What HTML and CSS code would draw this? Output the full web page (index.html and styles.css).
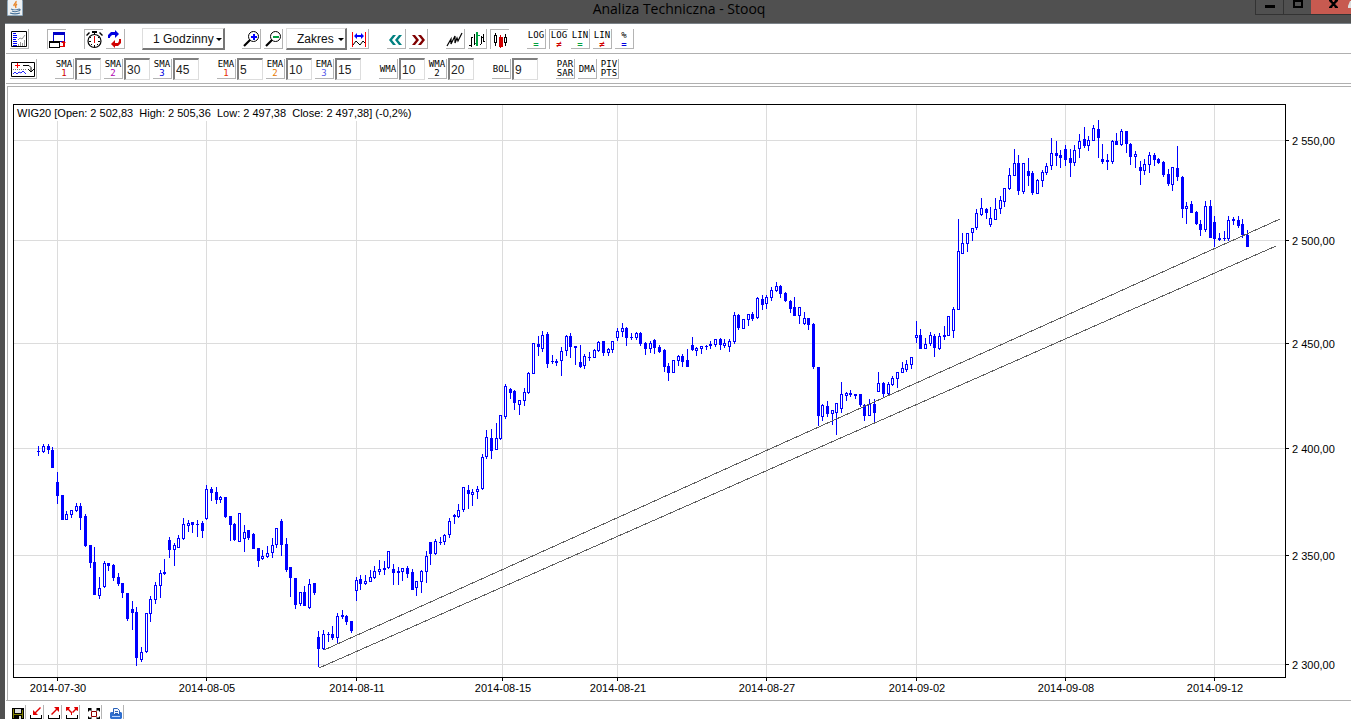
FILE: index.html
```html
<!DOCTYPE html>
<html lang="pl">

<head>
    <meta charset="UTF-8">
    <meta name="viewport" content="width=device-width, initial-scale=1.0">
    <title>Analiza Techniczna - Stooq</title>
    <link rel="stylesheet" href="styles.css">
</head>

<body>
    <header class="titlebar">
        <svg class="java" width="16" height="16" viewBox="0 0 16 16" aria-hidden="true">
            <rect width="16" height="16" rx="1" fill="#8fa9bd" />
            <rect x="1" y="0" width="14" height="15" fill="#eef1f3" />
            <path d="M9 1c1 2-3 3-2 5M10 4c-2 1-2 2-1 4" fill="none" stroke="#e8862a" stroke-width="1.4" />
            <path d="M4 9c2 1 6 1 8 0M5 11c2 1 4 1 6 0M12 9c2 0 1 2-1 2M3 13c3 1 7 1 10 0" fill="none" stroke="#47729a" stroke-width="1.2" />
        </svg>
        <h1>Analiza Techniczna - Stooq</h1>
        <div class="window-buttons">
            <button type="button" aria-label="Minimalizuj">
                <svg width="10" height="14" viewBox="0 0 10 14"><rect y="5" width="10" height="3" /></svg>
            </button>
            <button type="button" aria-label="Maksymalizuj">
                <svg width="10" height="14" viewBox="0 0 10 14"><path d="M0 0h10v8H0zM2 2v4h6V2z" fill-rule="evenodd" /></svg>
            </button>
            <button type="button" class="close" aria-label="Zamknij">
                <svg width="40" height="14" viewBox="0 0 40 14">
                    <path d="M18 0h3l1 2h1l1-2h3v1l-3 3 3 3v1h-3l-1-2h-1l-1 2h-3V7l3-3-3-3z" />
                    <path d="M40 1v7h-3V6l2-5z" fill="#ddd" />
                </svg>
            </button>
        </div>
    </header>

    <nav class="toolbar" aria-label="Wykres">
        <div class="group">
            <button type="button" aria-label="Lista">
                <svg viewBox="0 0 18 19">
                    <path d="M1.5 2.5h15v15h-15z" fill="none" stroke="#000" />
                    <path d="M3 4h3v1H3zM3 6h4v1H3zM3 8h4v1H3zM3 10h3v1H3zM3 12h4v1H3zM3 14h4v1H3zM3 16h4v1H3z" fill="#00f" />
                    <path d="M8 11l2-2 2 1 3-4M8.5 15v2M10.5 13v4M12.5 14v3M14.5 11v6" fill="none" stroke="#999" />
                </svg>
            </button>
        </div>
        <div class="group">
            <button type="button" class="pushed" aria-label="Okno">
                <svg viewBox="0 0 18 19">
                    <path d="M5 2h12v10H5zM6 5v6h10V5z" fill="#0000c8" fill-rule="evenodd" />
                    <path d="M1 11h11v7H1zM2 13v4h9v-4z" fill-rule="evenodd" />
                    <path d="M2 13h9v4H2z" fill="#fff" />
                    <path d="M12 16h3v-3h-2l2-2h1l2 2h-1v4h-5z" fill="#e00000" />
                </svg>
            </button>
        </div>
        <div class="group">
            <button type="button" class="pushed" aria-label="Czas rzeczywisty">
                <svg viewBox="0 0 18 19">
                    <circle cx="9.5" cy="11" r="6.5" fill="none" stroke="#000" stroke-width="1.2" />
                    <path d="M7 1h5v2H7zM9 3h1v2H9zM1 5l3-3 1 1-3 3zM14 3l1-1 3 3-1 1zM4 11h2v1H4zM13 11h2v1h-2zM9 15h1v2H9zM5 7h1v1H5zM13 7h1v1h-1zM6 14h1v1H6zM12 14h1v1h-1z" />
                    <path d="M9 6h1v7H9z" fill="#e00000" />
                </svg>
            </button>
            <button type="button" aria-label="Odśwież">
                <svg viewBox="0 0 18 19">
                    <path d="M2 9V6l3-3h4V1l4 4-4 4V6H6L4 8v1z" fill="#0000e0" />
                    <path d="M15 10v4l-3 3H9v2l-4-4 4-4v3h3l1-2v-2z" fill="#d00000" />
                </svg>
            </button>
        </div>
        <span class="drop drop-period">
            <select aria-label="Interwał"><option>1 Godzinny</option></select>
        </span>
        <div class="group">
            <button type="button" aria-label="Powiększ">
                <svg viewBox="0 0 18 19">
                    <circle cx="11.5" cy="7.5" r="5" fill="none" stroke="#000" />
                    <path d="M8 11l-6 6" stroke="#000" stroke-width="2.2" />
                    <path d="M11 5h2v2h2v2h-2v2h-2V9H9V7h2z" fill="#00f" />
                </svg>
            </button>
            <button type="button" aria-label="Pomniejsz">
                <svg viewBox="0 0 18 19">
                    <circle cx="11.5" cy="7.5" r="5" fill="none" stroke="#000" />
                    <path d="M8 11l-6 6" stroke="#000" stroke-width="2.2" />
                    <path d="M9 7h6v2H9z" fill="#00a040" />
                </svg>
            </button>
            <span class="drop drop-range">
                <select aria-label="Zakres"><option>Zakres</option></select>
            </span>
            <button type="button" aria-label="Dopasuj zakres">
                <svg viewBox="0 0 18 19">
                    <path d="M2 3h1v15H2zM15 3h1v15h-1z" fill="#f00" />
                    <path d="M4 7l3-3v2h4V4l3 3-3 3V8H7v2z" fill="#00f" />
                    <path d="M3 16l3-4 4 4 3-4 2 2" fill="none" stroke="#000" />
                </svg>
            </button>
        </div>
        <div class="group">
            <button type="button" aria-label="Wstecz">
                <svg viewBox="0 0 18 19"><path d="M6 6h3l-4 5 4 5H6l-4-5zM12 6h3l-4 5 4 5h-3l-4-5z" fill="#008080" /></svg>
            </button>
            <button type="button" aria-label="Dalej">
                <svg viewBox="0 0 18 19"><path d="M3 6h3l4 5-4 5H3l4-5zM9 6h3l4 5-4 5H9l4-5z" fill="#800000" /></svg>
            </button>
        </div>
        <div class="group">
            <button type="button" aria-label="Liniowy">
                <svg viewBox="0 0 18 19"><path d="M1 17l4-7v5l4-8v7l2-5 1 3 4-8" fill="none" stroke="#000" stroke-width="1.2" /></svg>
            </button>
            <button type="button" aria-label="Słupkowy">
                <svg viewBox="0 0 18 19">
                    <path d="M1 16h2V8h2v1H4v9H3v-1H1zM6 5h1v11H6zM12 15h1V7h1v8h-1v1h-1zM14 8h1V5h1v7h1v1h-2V9h-1z" />
                    <path d="M8 3h2v14H8zM7 14h1v1H7zM10 6h2v1h-2z" fill="#00a040" />
                </svg>
            </button>
            <button type="button" class="pushed" aria-label="Świecowy">
                <svg viewBox="0 0 18 19">
                    <path d="M4 3h1v2h1v8H5v3H4v-3H3V5h1zM4 6v6h1V6zM14 4h1v3h1v6h-1v3h-1v-3h-1V7h1zM14 8v4h1V8z" fill-rule="evenodd" />
                    <path d="M9 5h1v2h2v10h-2v1H9v-1H8V7h1z" fill="#d00000" />
                </svg>
            </button>
        </div>
        <div class="group scale">
            <button type="button"><span>LOG</span><span class="sign green">=</span></button>
            <button type="button" class="pushed"><span>LOG</span><span class="sign red">≠</span></button>
            <button type="button"><span>LIN</span><span class="sign green">=</span></button>
            <button type="button"><span>LIN</span><span class="sign red">≠</span></button>
            <button type="button"><span>%</span><span class="sign blue">=</span></button>
        </div>
    </nav>

    <nav class="toolbar" aria-label="Wskaźniki">
        <button type="button" class="wide" aria-label="Dodaj wskaźnik">
            <svg viewBox="0 0 26 19">
                <path d="M1.5 3.5h23v14h-23z" fill="none" stroke="#000" />
                <path d="M7 4h1v2h2v1H8v2H7V7H5V6h2z" fill="#f00" />
                <path d="M3 10h1v1H3zM5 10h1v1H5zM7 10h1v1H7zM9 10h1v1H9zM11 10h1v1h-1zM13 10h1v1h-1zM15 10h1v1h-1z" fill="#777" />
                <path d="M3 15l2-2 2 2 2-2 2 1 2-2 3 3" fill="none" stroke="#22f" />
                <path d="M13 6.5h6l2 2V13M18 10l3 3 3-3" fill="none" stroke="#000" />
            </svg>
        </button>
        <div class="group">
            <div class="pair"><button type="button" id="sma1"><span>SMA</span><span class="red">1</span></button><input type="text" value="15" aria-labelledby="sma1"></div>
            <div class="pair"><button type="button" id="sma2"><span>SMA</span><span class="purple">2</span></button><input type="text" value="30" aria-labelledby="sma2"></div>
            <div class="pair"><button type="button" id="sma3"><span>SMA</span><span class="blue">3</span></button><input type="text" value="45" aria-labelledby="sma3"></div>
        </div>
        <div class="group">
            <div class="pair"><button type="button" id="ema1"><span>EMA</span><span class="vermilion">1</span></button><input type="text" value="5" aria-labelledby="ema1"></div>
            <div class="pair"><button type="button" id="ema2"><span>EMA</span><span class="orange">2</span></button><input type="text" value="10" aria-labelledby="ema2"></div>
            <div class="pair"><button type="button" id="ema3"><span>EMA</span><span class="violet">3</span></button><input type="text" value="15" aria-labelledby="ema3"></div>
        </div>
        <div class="group">
            <div class="pair"><button type="button" id="wma1" class="single"><span>WMA</span></button><input type="text" value="10" aria-labelledby="wma1"></div>
            <div class="pair"><button type="button" id="wma2"><span>WMA</span><span>2</span></button><input type="text" value="20" aria-labelledby="wma2"></div>
        </div>
        <div class="group">
            <div class="pair"><button type="button" id="bol" class="single"><span>BOL</span></button><input type="text" value="9" aria-labelledby="bol"></div>
        </div>
        <div class="group">
            <button type="button"><span>PAR</span><span>SAR</span></button>
            <button type="button" class="single"><span>DMA</span></button>
            <button type="button"><span>PIV</span><span>PTS</span></button>
        </div>
    </nav>

    <main class="chart-panel">
        <svg id="chart" class="chart" viewBox="8 87 1343 613" role="img" aria-label="WIG20"></svg>
    </main>

    <footer class="bottombar">
        <div class="group">
            <button type="button" aria-label="Zapisz">
                <svg viewBox="0 0 13 14">
                    <path d="M0 2h12v12H1l-1-1z" />
                    <path d="M1 3h1v9H1zM10 4h1v8h-1zM2 8h8v1H2z" fill="#808000" />
                    <path d="M3 3h6v4H3zM7 10h2v3H7z" fill="#ddd" />
                </svg>
            </button>
            <button type="button" aria-label="Wczytaj">
                <svg viewBox="0 0 13 14">
                    <path d="M0 9h1v3h10V9h1v5H0z" />
                    <path d="M10 1l1 1-5 5 2 2H3V4l2 2z" fill="#e00000" />
                </svg>
            </button>
            <button type="button" aria-label="Eksportuj">
                <svg viewBox="0 0 13 14">
                    <path d="M0 9h1v3h10V9h1v5H0z" />
                    <path d="M4 9L3 8l5-5-2-2h5v5L9 4z" fill="#e00000" />
                </svg>
            </button>
            <button type="button" aria-label="Eksportuj wszystko">
                <svg viewBox="0 0 13 14">
                    <path d="M0 9h1v3h10V9h1v5H0z" />
                    <path d="M0 1h4L3 3l3 3v3H5V7L2 4 0 5zM12 1H8l1 2-3 3 1 1 3-3 2 1z" fill="#e00000" />
                </svg>
            </button>
        </div>
        <button type="button" aria-label="Pełny ekran">
            <svg viewBox="0 0 13 14">
                <path d="M0 2h4L3 3l1 1-1 1-1-1-2 2zM12 2H8l1 1-1 1 1 1 1-1 2 2zM0 14h4l-1-1 1-1-1-1-1 1-2-2zM12 14H8l1-1-1-1 1-1 1 1 2-2z" />
                <path d="M3.5 5.5h5v5h-5z" fill="none" stroke="#900000" />
            </svg>
        </button>
        <button type="button" aria-label="Drukuj">
            <svg viewBox="0 0 13 14">
                <path d="M1 6h10l1 1v5l-1 1H1l-1-1V7z" fill="#2f6fd0" />
                <path d="M3.5 2.5h4l2 2v4h-6z" fill="#eef4ff" stroke="#2860b8" />
                <path d="M5 5.5h3M5 7.5h3" stroke="#2860b8" />
                <path d="M2 10h8v1H2z" fill="#b8d4ff" />
            </svg>
        </button>
    </footer>
    <script src="chart.js"></script>
</body>

</html>
```

FILE: styles.css
```css
body {
    margin: 0;
    min-height: 100vh;
    box-sizing: border-box;
    border-left: 5px solid #505050;
    background-color: #fff;
    font-family: "Liberation Sans", Arial, sans-serif;
    font-size: 12px;
    color: #000;
    overflow: hidden;
}

button {
    box-sizing: border-box;
    margin: 0;
    padding: 0;
    background: none;
    border: 0;
    color: inherit;
}

/* Title bar */
.titlebar {
    display: grid;
    grid-template-columns: 1fr auto 1fr;
    align-items: start;
    height: 23px;
    padding-left: 2px;
    background-color: #505050;
    border-bottom: 1px solid #7b8288;
}

.titlebar h1 {
    margin: 0;
    font-family: "Open Sans", "Noto Sans", sans-serif;
    font-size: 14px;
    font-weight: normal;
    line-height: 18px;
}

.window-buttons {
    display: flex;
    justify-self: end;
}

.window-buttons button {
    display: flex;
    justify-content: center;
    width: 28px;
    height: 15px;
    border: 1px solid #333;
    border-top: 0;
    border-right: 0;
}

.window-buttons .close {
    width: 40px;
    background-color: #c75a50;
    border-left: 0;
}

/* Toolbars */
.toolbar {
    display: flex;
    align-items: center;
    gap: 18px;
    margin-left: 1px;
    padding: 4px 4px 3px;
    border-bottom: 1px solid #b0b0b0;
}

.group {
    display: flex;
    align-items: center;
    gap: 3px;
}

.pair {
    display: flex;
    align-items: center;
    gap: 1px;
}

.toolbar button {
    display: flex;
    flex-direction: column;
    align-items: center;
    width: 19px;
    height: 20px;
    border: 0 solid #b4b4b4;
    border-width: 0 1px 1px 0;
    font-family: "DejaVu Sans Mono", monospace;
    font-size: 9px;
    line-height: 9px;
}

.toolbar button.pushed {
    border-width: 1px 0 0 1px;
}

.toolbar button.wide {
    width: 27px;
}

.toolbar button.single {
    justify-content: center;
}

.toolbar button:has(span) {
    padding-top: 1px;
}

.toolbar .scale button {
    padding-top: 2px;
}

.toolbar .scale button.pushed {
    padding-top: 1px;
}

.scale .sign {
    font-weight: bold;
}

.toolbar svg {
    display: block;
    width: 100%;
    height: 19px;
}

.toolbar input {
    box-sizing: border-box;
    width: 26px;
    height: 22px;
    padding: 0 1px;
    border: 2px solid #808080;
    border-right: 1px solid #ddd;
    border-bottom: 1px solid #ddd;
    font: 12px "Liberation Sans", Arial, sans-serif;
    color: #222;
}

.drop {
    display: grid;
    align-items: center;
}

.drop-period {
    width: 83px;
    margin: 0 -1px;
}

.drop-range {
    width: 61px;
}

.drop select,
.drop::after {
    grid-area: 1 / 1;
}

.drop select {
    appearance: none;
    box-sizing: border-box;
    width: 100%;
    height: 22px;
    padding: 0 0 0 10px;
    background-color: #fff;
    border: 1px solid #ddd;
    border-right: 2px solid #777;
    border-bottom: 2px solid #777;
    border-radius: 0;
    font: 12px "Liberation Sans", Arial, sans-serif;
    color: #111;
}

.drop::after {
    content: "";
    justify-self: end;
    margin-right: 3px;
    border: 3px solid transparent;
    border-top-color: #000;
    border-bottom: 0;
    pointer-events: none;
}

.red {
    color: #d00000;
}

.green {
    color: #00a040;
}

.blue {
    color: #0000e0;
}

.purple {
    color: #b000b0;
}

.vermilion {
    color: #e83000;
}

.orange {
    color: #e87800;
}

.violet {
    color: #5858e8;
}

/* Chart */
.chart-panel {
    margin: 2px 0 0 2px;
    border-top: 1px solid #b0b0b0;
    border-left: 1px solid #b0b0b0;
}

.chart {
    display: block;
    width: 100%;
    height: auto;
    shape-rendering: crispEdges;
}

.chart text {
    font-size: 11px;
    white-space: pre;
}

.chart .date {
    text-anchor: middle;
}

.grid {
    fill: #dcdcdc;
}

.axis {
    fill: #000;
}

.heading-back {
    fill: #fff;
}

.trend {
    stroke: #606060;
    stroke-width: 1;
}

.candle {
    fill: #00f;
}

.candle-hollow {
    fill: #fff;
}

/* Bottom bar */
.bottombar {
    display: flex;
    gap: 8px;
    margin-left: 1px;
    padding: 4px 6px 0;
    border-top: 1px solid #b0b0b0;
}

.bottombar .group {
    gap: 4px;
}

.bottombar button {
    width: 14px;
    height: 15px;
    border-right: 1px solid #b4b4b4;
}

.bottombar svg {
    display: block;
    width: 13px;
    height: 14px;
}
```

FILE: chart.js
```js
const chart = document.getElementById("chart");

// plot frame
const LEFT = 13, TOP = 104, RIGHT = 1285, BOTTOM = 677;

const prices = [
    [140, "2 550,00"], [240, "2 500,00"], [343, "2 450,00"],
    [448, "2 400,00"], [555, "2 350,00"], [664, "2 300,00"]
];

const dates = [
    [57, "2014-07-30"], [206, "2014-08-05"], [356, "2014-08-11"],
    [502, "2014-08-15"], [617, "2014-08-21"], [766, "2014-08-27"],
    [916, "2014-09-02"], [1065, "2014-09-08"], [1214, "2014-09-12"]
];

// high, body top, body bottom, low, 1 = rising hour
const candles = [
    [446,451,452,456,0], [444,446,452,453,1], [444,446,450,454,0], [447,450,468,468,0],
    [472,482,496,504,0], [495,495,520,520,0], [511,514,520,520,1], [510,510,515,518,1],
    [503,506,511,512,1], [503,506,518,530,0], [514,516,546,547,0], [545,545,563,568,0],
    [547,562,595,595,0], [577,588,596,599,1], [561,563,587,588,1], [563,563,566,571,0],
    [564,565,578,581,0], [573,577,584,586,0], [583,583,593,598,0], [593,593,619,621,0],
    [601,609,613,630,0], [607,612,658,666,0], [647,652,660,662,1], [613,613,652,653,1],
    [596,599,614,622,1], [582,585,600,604,1], [570,573,586,598,1], [559,572,574,575,0],
    [537,540,550,558,0], [543,545,550,566,1], [535,538,548,548,1], [518,524,539,540,1],
    [520,523,526,532,1], [522,522,525,533,0], [520,524,525,537,0], [521,523,531,538,0],
    [485,489,519,520,1], [487,489,493,501,0], [487,492,500,504,0], [496,497,500,503,1],
    [497,497,517,518,0], [516,516,525,541,0], [523,524,540,541,0], [513,513,542,542,1],
    [525,532,539,552,1], [530,530,538,540,0], [533,534,549,549,0], [548,548,561,567,0],
    [550,556,559,560,1], [546,553,557,558,1], [538,545,553,558,1], [528,528,545,548,1],
    [519,521,545,556,0], [538,544,570,572,0], [567,567,578,597,0], [578,578,605,609,0],
    [592,592,604,606,1], [586,592,606,606,0], [579,584,608,609,1], [583,583,593,595,0],
    [631,637,649,667,0], [630,634,649,650,1], [632,634,635,642,0], [626,634,638,640,0],
    [613,616,638,643,1], [610,615,617,619,0], [615,616,622,625,0], [621,621,631,633,0],
    [577,580,591,601,1], [575,579,584,590,0], [575,581,584,585,1], [570,577,582,582,1],
    [566,571,578,579,1], [560,569,572,575,1], [561,568,570,575,0], [551,551,568,569,1],
    [564,569,573,585,0], [567,571,573,585,0], [568,568,572,581,1], [566,568,574,578,0],
    [569,572,590,590,0], [581,581,588,596,1], [570,571,582,593,1], [551,556,572,583,1],
    [542,542,554,565,0], [539,541,554,555,1], [537,542,543,545,0], [534,535,542,545,1],
    [518,521,535,538,1], [514,515,517,524,0], [504,510,517,518,1], [487,487,510,512,1],
    [485,490,494,509,0], [489,492,495,506,1], [486,489,492,499,1], [454,457,489,490,1],
    [430,437,457,459,1], [429,438,451,459,0], [423,438,450,450,1], [415,415,439,440,1],
    [384,386,417,419,1], [388,389,393,399,0], [390,391,403,410,0], [400,400,405,415,1],
    [388,392,401,406,1], [372,373,393,394,1], [343,343,374,374,1], [336,344,347,356,0],
    [331,335,349,352,1], [332,334,364,368,0], [355,361,362,364,0], [359,361,363,366,0],
    [347,351,361,376,1], [335,336,351,356,1], [333,336,347,358,0], [346,346,348,365,0],
    [345,362,367,368,0], [354,356,366,369,1], [352,357,358,361,0], [349,350,358,358,1],
    [341,342,351,352,1], [341,341,353,356,0], [348,349,353,356,1], [341,341,350,353,1],
    [328,331,338,341,1], [323,328,332,337,1], [327,328,338,346,0], [333,337,338,340,0],
    [332,333,338,340,1], [332,333,344,346,0], [342,343,349,355,0], [341,343,349,353,1],
    [339,340,348,354,0], [345,347,352,353,0], [349,350,367,372,0], [363,366,373,381,0],
    [360,360,373,373,1], [355,356,361,366,1], [354,356,362,367,0], [349,360,367,367,0],
    [337,345,350,351,0], [347,348,351,356,1], [346,346,349,354,1], [345,346,347,350,0],
    [341,344,346,349,0], [339,339,345,347,1], [338,339,345,350,0], [339,343,346,348,1],
    [339,341,347,352,1], [312,315,342,344,1], [314,315,328,330,0], [319,319,329,329,1],
    [314,314,320,326,1], [312,314,319,321,0], [297,298,318,319,1], [295,299,305,310,0],
    [295,297,304,309,1], [287,290,298,301,1], [282,286,291,292,1], [285,286,294,298,0],
    [292,293,301,302,0], [300,301,309,313,0], [297,307,316,316,0], [307,307,316,324,1],
    [312,318,324,325,1], [318,318,325,330,0], [323,324,367,369,0], [367,367,416,426,0],
    [404,405,417,421,1], [401,406,414,417,0], [410,410,414,425,1], [403,403,413,435,1],
    [382,394,409,413,1], [392,393,396,401,1], [390,393,395,397,0], [394,394,396,399,0],
    [394,394,405,407,0], [404,405,416,421,0], [399,404,416,416,1], [399,404,413,423,0],
    [372,383,392,392,1], [382,383,394,397,0], [382,384,394,395,1], [376,378,385,386,1],
    [372,372,379,388,1], [362,368,373,373,1], [360,364,370,372,1], [357,357,365,369,1],
    [321,335,338,343,1], [329,335,349,349,0], [338,344,349,349,1], [332,335,344,346,1],
    [334,336,348,357,0], [333,336,349,350,1], [326,335,337,340,0], [316,316,336,336,1],
    [307,309,331,338,1], [219,251,310,310,1], [233,243,254,254,1], [233,233,244,252,1],
    [228,228,233,241,1], [209,213,228,230,1], [198,208,215,216,1], [208,209,213,219,0],
    [207,218,225,227,1], [198,209,220,220,1], [196,200,209,214,1], [188,188,202,207,1],
    [168,175,189,190,1], [149,163,176,176,1], [155,163,191,195,0], [163,163,192,194,1],
    [158,171,176,186,0], [171,173,193,195,0], [179,180,194,194,1], [170,172,181,187,1],
    [163,166,173,175,1], [138,153,166,170,1], [141,153,156,166,0], [150,155,158,168,0],
    [145,149,160,166,0], [149,158,163,177,0], [145,150,163,166,1], [134,141,149,158,1],
    [127,139,146,148,0], [136,140,146,151,1], [125,128,141,141,1], [120,129,138,158,0],
    [144,159,162,164,0], [154,160,162,170,0], [140,141,162,164,1], [133,141,145,145,0],
    [129,131,145,146,1], [131,131,144,153,0], [143,144,157,165,0], [151,154,157,168,1],
    [161,167,171,185,0], [159,164,171,175,1], [152,155,165,173,1], [153,155,160,166,0],
    [158,159,163,164,0], [161,162,175,177,0], [169,174,184,186,0], [167,167,185,191,1],
    [146,168,177,181,0], [176,177,209,218,0], [202,206,209,224,1], [201,204,213,213,0],
    [211,212,224,225,0], [220,224,230,236,0], [201,206,230,232,1], [200,206,238,238,0],
    [216,222,239,247,0], [233,238,240,241,0], [231,238,239,241,0], [216,220,239,241,1],
    [217,219,221,225,0], [216,220,226,228,0], [219,224,235,238,0], [230,235,247,247,0]
];

function add(name, attrs, text) {
    const el = document.createElementNS("http://www.w3.org/2000/svg", name);
    for (const key in attrs) {
        el.setAttribute(key, attrs[key]);
    }
    if (text) {
        el.textContent = text;
    }
    chart.appendChild(el);
}

function box(cls, x, y, width, height) {
    add("rect", { class: cls, x, y, width, height });
}

prices.forEach(([y, label]) => {
    box("grid", LEFT, y, RIGHT - LEFT, 1);
    box("axis", RIGHT, y, 4, 1);
    add("text", { x: RIGHT + 7, y: y + 5 }, label);
});

dates.forEach(([x, label]) => {
    box("grid", x, TOP, 1, BOTTOM - TOP);
    box("axis", x, BOTTOM, 1, 4);
    add("text", { class: "date", x: x + 1, y: BOTTOM + 15 }, label);
});

box("heading-back", LEFT, TOP, 392, 17);
add("text", { x: LEFT + 4, y: TOP + 13 }, "WIG20 [Open: 2 502,83  High: 2 505,36  Low: 2 497,38  Close: 2 497,38] (-0,2%)");

// three candles take 14px
candles.forEach(([high, top, bottom, low, rising], i) => {
    const x = 38 + Math.ceil(i * 14 / 3);
    box("candle", x, high, 1, low - high);
    box("candle", x - 1, top, 3, bottom - top);
    if (rising && bottom - top > 2) {
        box("candle-hollow", x, top + 1, 1, bottom - top - 2);
    }
});

add("line", { class: "trend", x1: 324, y1: 650, x2: 1280, y2: 219 });
add("line", { class: "trend", x1: 319, y1: 668, x2: 1276, y2: 246 });

box("axis", LEFT, TOP, RIGHT - LEFT + 1, 1);
box("axis", LEFT, BOTTOM, RIGHT - LEFT + 1, 1);
box("axis", LEFT, TOP, 1, BOTTOM - TOP);
box("axis", RIGHT, TOP, 1, BOTTOM - TOP);
```
